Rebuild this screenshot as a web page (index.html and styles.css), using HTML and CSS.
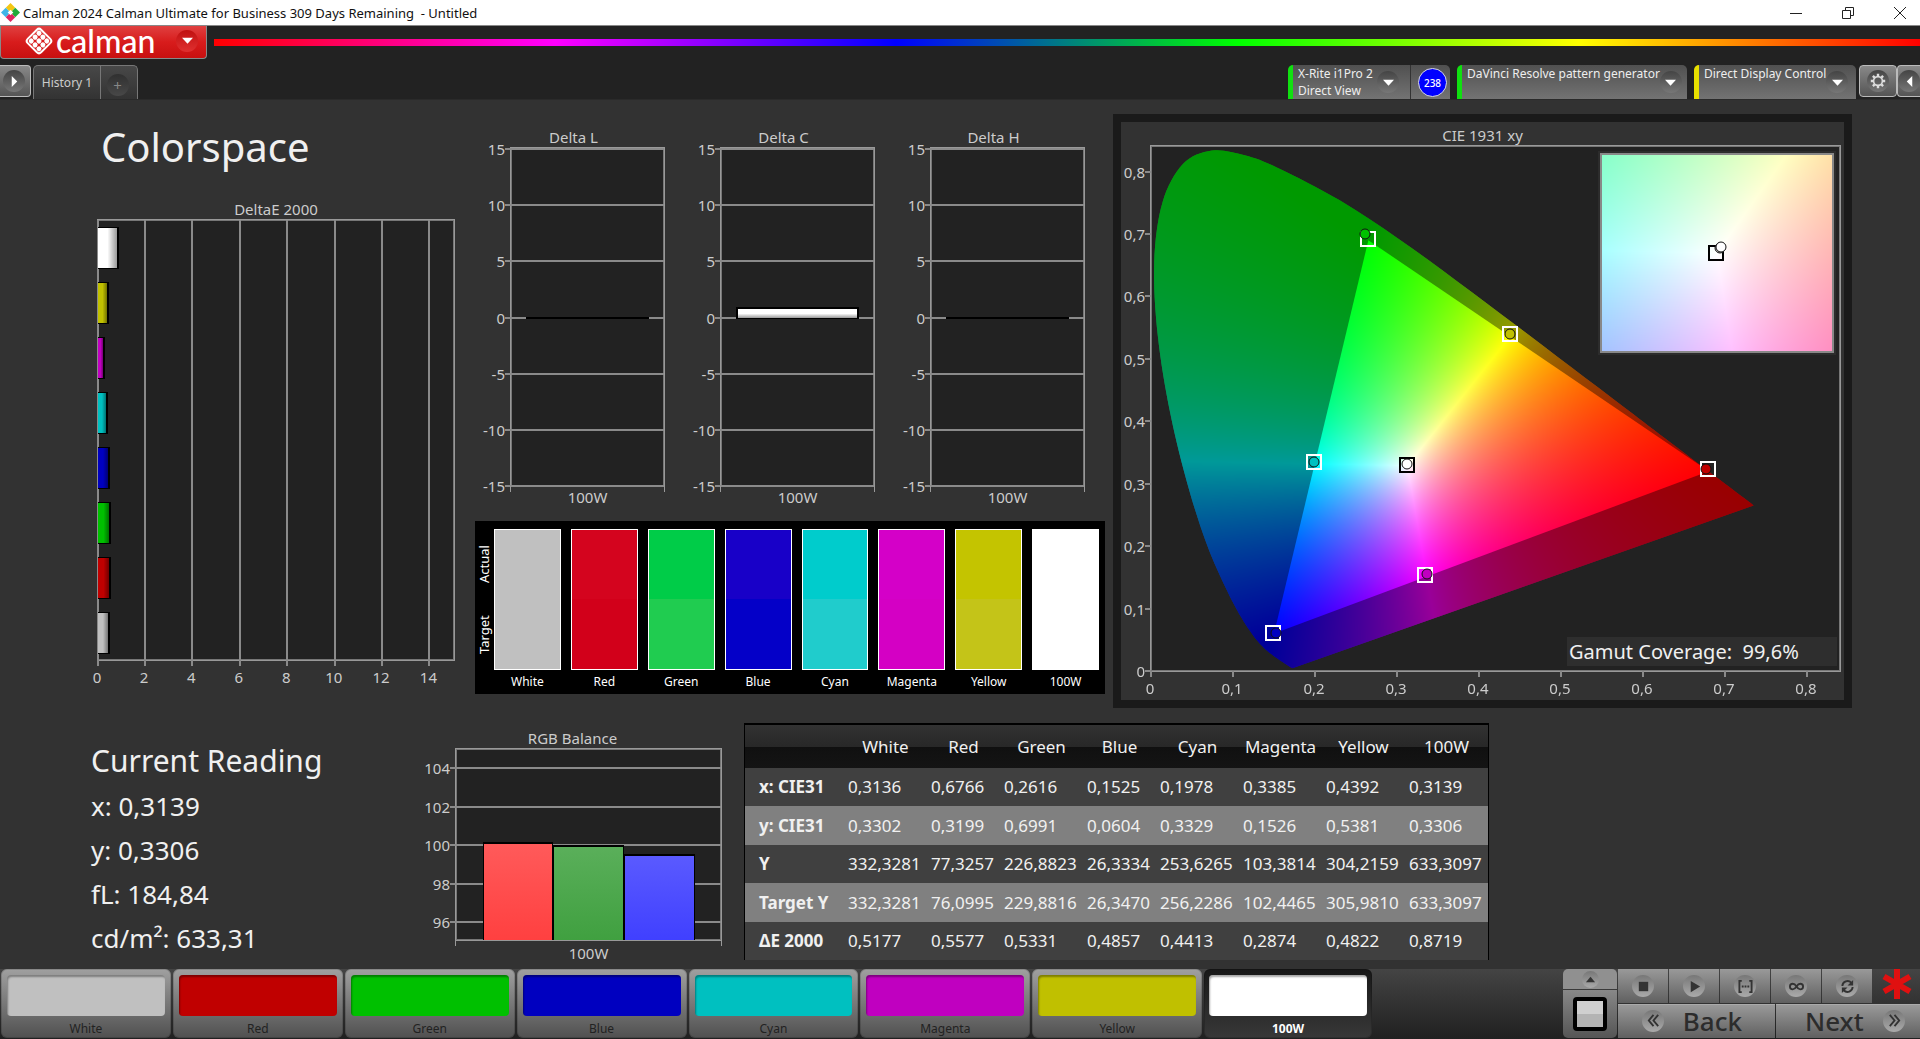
FILE: index.html
```html
<!DOCTYPE html>
<html lang="en">
<head>
<meta charset="utf-8">
<title>Calman 2024 Calman Ultimate for Business</title>
<link rel="stylesheet" href="styles.css">
</head>
<body>
<div class="app">
  <header class="titlebar">
    <svg class="app-icon" viewBox="0 0 20 20" aria-hidden="true">
      <path fill="#f3c613" d="M10 0l5 5-5 5-5-5z"/><path fill="#3fb5e8" d="M5 5l5 5-5 5-5-5z"/><path fill="#22ab3a" d="M15 5l5 5-5 5-5-5z"/><path fill="#e02660" d="M10 10l5 5-5 5-5-5z"/><path fill="#fff" d="M10 7l3 3-3 3-3-3z"/>
    </svg>
    <span class="window-title">Calman 2024 Calman Ultimate for Business 309 Days Remaining&nbsp; - Untitled</span>
    <div class="window-buttons">
      <button type="button" aria-label="Minimize"><svg viewBox="0 0 14 14"><path d="M1 7.500h12"/></svg></button>
      <button type="button" aria-label="Restore"><svg viewBox="0 0 14 14"><path d="M1.500 4.500h8v8h-8zM4.500 4.500v-3h8v8h-3"/></svg></button>
      <button type="button" aria-label="Close"><svg viewBox="0 0 14 14"><path d="M1 1l12 12M13 1L1 13"/></svg></button>
    </div>
  </header>

  <div class="brand-row">
    <button type="button" class="brand">
      <svg class="brand-mark" viewBox="0 0 28 28" aria-hidden="true">
        <g transform="rotate(45 14 14)">
          <rect x="4.500" y="4.500" width="19" height="19" rx="3" fill="none" stroke="#fff" stroke-width="2"/>
          <g fill="#fff"><circle cx="8.500" cy="8.500" r="2.500"/><circle cx="14" cy="8.500" r="2.500"/><circle cx="19.500" cy="8.500" r="2.500"/><circle cx="8.500" cy="14" r="2.500"/><circle cx="14" cy="14" r="2.500"/><circle cx="19.500" cy="14" r="2.500"/><circle cx="8.500" cy="19.500" r="2.500"/><circle cx="14" cy="19.500" r="2.500"/><circle cx="19.500" cy="19.500" r="2.500"/></g>
        </g>
      </svg>
      <span class="brand-name">calman</span>
      <span class="round brand-round"><svg viewBox="0 0 12 12"><path d="M0 3h12L6 9.500z"/></svg></span>
    </button>
    <div class="spectrum"></div>
  </div>

  <div class="tab-row">
    <button type="button" class="edge-button left" aria-label="Expand"><span class="round"><svg viewBox="0 0 12 12"><path d="M3 0v12l6-6z"/></svg></span></button>
    <nav class="tabs">
      <button type="button" class="tab">History 1</button>
      <button type="button" class="tab add" aria-label="Add"><span class="round dim">+</span></button>
    </nav>
    <div class="devices">
      <button type="button" class="device meter">
        <span class="device-name">X-Rite i1Pro 2<br>Direct View</span>
        <span class="round"><svg viewBox="0 0 12 12"><path d="M0 3h12L6 9.500z"/></svg></span>
      </button><span class="meter-count"><b>238</b></span>
      <button type="button" class="device source">
        <span class="device-name">DaVinci Resolve pattern generator</span>
        <span class="round"><svg viewBox="0 0 12 12"><path d="M0 3h12L6 9.500z"/></svg></span>
      </button>
      <button type="button" class="device display">
        <span class="device-name">Direct Display Control</span>
        <span class="round"><svg viewBox="0 0 12 12"><path d="M0 3h12L6 9.500z"/></svg></span>
      </button>
      <button type="button" class="edge-button gear" aria-label="Settings"><span class="round"><svg class="gear-icon" viewBox="0 0 20 20"><circle cx="10" cy="10" r="5.500" fill="none" stroke="#ddd" stroke-width="2"/><path fill="none" stroke="#ddd" stroke-width="3" d="M10 1v3M10 16v3M1 10h3M16 10h3M3.600 3.600l2.200 2.200M14.200 14.200l2.200 2.200M16.400 3.600l-2.200 2.200M5.800 14.200l-2.200 2.200"/></svg></span></button>
      <button type="button" class="edge-button right" aria-label="Collapse"><span class="round"><svg viewBox="0 0 12 12"><path d="M9 0v12L3 6z"/></svg></span></button>
    </div>
  </div>

  <main class="workspace">
    <div class="top">
      <section class="delta-e">
        <h1>Colorspace</h1>
        <h2 class="chart-title">DeltaE 2000</h2>
        <div class="plot plot-e">
          <i class="xt" style="left:0%"><b>0</b></i><i class="xt" style="left:13.2%"><b>2</b></i><i class="xt" style="left:26.5%"><b>4</b></i><i class="xt" style="left:39.8%"><b>6</b></i><i class="xt" style="left:53.2%"><b>8</b></i><i class="xt" style="left:66.5%"><b>10</b></i><i class="xt" style="left:79.8%"><b>12</b></i><i class="xt" style="left:93.1%"><b>14</b></i>
          <div class="bars">
            <span class="bar c-100w" style="width:5.81%"></span>
            <span class="bar c-yellow" style="width:3.21%"></span>
            <span class="bar c-magenta" style="width:1.92%"></span>
            <span class="bar c-cyan" style="width:2.94%"></span>
            <span class="bar c-blue" style="width:3.24%"></span>
            <span class="bar c-green" style="width:3.55%"></span>
            <span class="bar c-red" style="width:3.72%"></span>
            <span class="bar c-white" style="width:3.45%"></span>
          </div>
        </div>
      </section>

      <section class="middle">
        <div class="deltas">
          <figure class="delta">
            <figcaption class="chart-title">Delta L</figcaption>
            <div class="plot plot-d">
              <i class="yt" style="top:0%"><b>15</b></i><i class="yt" style="top:16.67%"><b>10</b></i><i class="yt" style="top:33.33%"><b>5</b></i><i class="yt" style="top:50%"><b>0</b></i><i class="yt" style="top:66.67%"><b>-5</b></i><i class="yt" style="top:83.33%"><b>-10</b></i><i class="yt" style="top:100%"><b>-15</b></i>
              <span class="dbar flat"></span>
            </div>
            <p class="category">100W</p>
          </figure>
          <figure class="delta">
            <figcaption class="chart-title">Delta C</figcaption>
            <div class="plot plot-d">
              <i class="yt" style="top:0%"><b>15</b></i><i class="yt" style="top:16.67%"><b>10</b></i><i class="yt" style="top:33.33%"><b>5</b></i><i class="yt" style="top:50%"><b>0</b></i><i class="yt" style="top:66.67%"><b>-5</b></i><i class="yt" style="top:83.33%"><b>-10</b></i><i class="yt" style="top:100%"><b>-15</b></i>
              <span class="dbar" style="height:3.5%"></span>
            </div>
            <p class="category">100W</p>
          </figure>
          <figure class="delta">
            <figcaption class="chart-title">Delta H</figcaption>
            <div class="plot plot-d">
              <i class="yt" style="top:0%"><b>15</b></i><i class="yt" style="top:16.67%"><b>10</b></i><i class="yt" style="top:33.33%"><b>5</b></i><i class="yt" style="top:50%"><b>0</b></i><i class="yt" style="top:66.67%"><b>-5</b></i><i class="yt" style="top:83.33%"><b>-10</b></i><i class="yt" style="top:100%"><b>-15</b></i>
              <span class="dbar flat"></span>
            </div>
            <p class="category">100W</p>
          </figure>
        </div>

        <div class="compare">
          <div class="compare-side"><span>Actual</span><span>Target</span></div>
          <div class="chip"><span class="chip-color p-white"></span>White</div>
          <div class="chip"><span class="chip-color p-red"></span>Red</div>
          <div class="chip"><span class="chip-color p-green"></span>Green</div>
          <div class="chip"><span class="chip-color p-blue"></span>Blue</div>
          <div class="chip"><span class="chip-color p-cyan"></span>Cyan</div>
          <div class="chip"><span class="chip-color p-magenta"></span>Magenta</div>
          <div class="chip"><span class="chip-color p-yellow"></span>Yellow</div>
          <div class="chip"><span class="chip-color p-100w"></span>100W</div>
        </div>
      </section>

      <section class="cie">
        <h2 class="chart-title">CIE 1931 xy</h2>
        <div class="plot plot-cie">
          <canvas id="gamut" class="gamut"></canvas>
          <i class="xt short" style="left:0%"><b>0</b></i><i class="xt short" style="left:11.9%"><b>0,1</b></i><i class="xt short" style="left:23.8%"><b>0,2</b></i><i class="xt short" style="left:35.7%"><b>0,3</b></i><i class="xt short" style="left:47.6%"><b>0,4</b></i><i class="xt short" style="left:59.5%"><b>0,5</b></i><i class="xt short" style="left:71.4%"><b>0,6</b></i><i class="xt short" style="left:83.3%"><b>0,7</b></i><i class="xt short" style="left:95.2%"><b>0,8</b></i>
          <i class="yt short" style="top:100%"><b>0</b></i><i class="yt short" style="top:88.1%"><b>0,1</b></i><i class="yt short" style="top:76.2%"><b>0,2</b></i><i class="yt short" style="top:64.3%"><b>0,3</b></i><i class="yt short" style="top:52.4%"><b>0,4</b></i><i class="yt short" style="top:40.5%"><b>0,5</b></i><i class="yt short" style="top:28.6%"><b>0,6</b></i><i class="yt short" style="top:16.8%"><b>0,7</b></i><i class="yt short" style="top:4.9%"><b>0,8</b></i>
          <span class="target" style="left:31.5%;bottom:82.2%"></span><span class="reading c-green" style="left:31.1%;bottom:83.3%"></span>
          <span class="target" style="left:52.1%;bottom:64.1%"></span><span class="reading c-yellow" style="left:52.1%;bottom:64.1%"></span>
          <span class="target" style="left:23.7%;bottom:39.8%"></span><span class="reading c-cyan" style="left:23.6%;bottom:39.8%"></span>
          <span class="target dark" style="left:37.2%;bottom:39.3%"></span><span class="reading c-100w" style="left:37.2%;bottom:39.500%"></span>
          <span class="target" style="left:80.9%;bottom:38.4%"></span><span class="reading c-red" style="left:80.5%;bottom:38.4%"></span>
          <span class="target" style="left:39.8%;bottom:18.2%"></span><span class="reading c-magenta" style="left:40.1%;bottom:18.4%"></span>
          <span class="target" style="left:17.7%;bottom:7.3%"></span><span class="reading c-blue" style="left:18.1%;bottom:7.3%"></span>
          <div class="inset">
            <canvas id="zoom"></canvas>
            <span class="target dark" style="left:49.500%;bottom:50%"></span><span class="reading c-white" style="left:51.2%;bottom:52.300%"></span><span class="reading c-100w" style="left:52%;bottom:53%"></span>
          </div>
          <p class="coverage">Gamut Coverage:&nbsp; 99,6%</p>
        </div>
      </section>
    </div>

    <div class="bottom">
      <section class="current">
        <h2>Current Reading</h2>
        <p>x: 0,3139</p>
        <p>y: 0,3306</p>
        <p>fL: 184,84</p>
        <p>cd/m²: 633,31</p>
      </section>
      <section class="balance">
        <h2 class="chart-title">RGB Balance</h2>
        <div class="plot plot-rgb">
          <i class="yt" style="top:10.2%"><b>104</b></i><i class="yt" style="top:30.500%"><b>102</b></i><i class="yt" style="top:50.500%"><b>100</b></i><i class="yt" style="top:70.700%"><b>98</b></i><i class="yt" style="top:90.700%"><b>96</b></i>
          <div class="rgb-bars"><span class="r" style="height:51.4%"></span><span class="g" style="height:49.8%"></span><span class="b" style="height:45%"></span></div>
        </div>
        <p class="category">100W</p>
      </section>
      <section class="data">
        <table>
          <colgroup><col class="w-head"><col class="w-wide"><col class="w-slim"><col class="w-wide"><col class="w-slim"><col class="w-wide"><col class="w-wide"><col class="w-wide"><col class="w-wide"></colgroup>
          <thead><tr><td></td><th scope="col">White</th><th scope="col">Red</th><th scope="col">Green</th><th scope="col">Blue</th><th scope="col">Cyan</th><th scope="col">Magenta</th><th scope="col">Yellow</th><th scope="col">100W</th></tr></thead>
          <tbody>
            <tr><th scope="row">x: CIE31</th><td>0,3136</td><td>0,6766</td><td>0,2616</td><td>0,1525</td><td>0,1978</td><td>0,3385</td><td>0,4392</td><td>0,3139</td></tr>
            <tr><th scope="row">y: CIE31</th><td>0,3302</td><td>0,3199</td><td>0,6991</td><td>0,0604</td><td>0,3329</td><td>0,1526</td><td>0,5381</td><td>0,3306</td></tr>
            <tr><th scope="row">Y</th><td>332,3281</td><td>77,3257</td><td>226,8823</td><td>26,3334</td><td>253,6265</td><td>103,3814</td><td>304,2159</td><td>633,3097</td></tr>
            <tr><th scope="row">Target Y</th><td>332,3281</td><td>76,0995</td><td>229,8816</td><td>26,3470</td><td>256,2286</td><td>102,4465</td><td>305,9810</td><td>633,3097</td></tr>
            <tr><th scope="row">ΔE 2000</th><td>0,5177</td><td>0,5577</td><td>0,5331</td><td>0,4857</td><td>0,4413</td><td>0,2874</td><td>0,4822</td><td>0,8719</td></tr>
          </tbody>
        </table>
      </section>
    </div>
  </main>

  <footer class="dock">
    <div class="patches">
      <button type="button" class="patch"><span class="patch-color c-white"></span>White</button>
      <button type="button" class="patch"><span class="patch-color c-red"></span>Red</button>
      <button type="button" class="patch"><span class="patch-color c-green"></span>Green</button>
      <button type="button" class="patch"><span class="patch-color c-blue"></span>Blue</button>
      <button type="button" class="patch"><span class="patch-color c-cyan"></span>Cyan</button>
      <button type="button" class="patch"><span class="patch-color c-magenta"></span>Magenta</button>
      <button type="button" class="patch"><span class="patch-color c-yellow"></span>Yellow</button>
      <button type="button" class="patch selected"><span class="patch-color c-100w"></span>100W</button>
    </div>
    <div class="controls">
      <div class="pattern">
        <button type="button" class="pattern-up" aria-label="Pattern options"><span class="disc small"><svg viewBox="0 0 12 12"><path d="M1 9h10L6 3z"/></svg></span></button>
        <button type="button" class="pattern-window" aria-label="Pattern window"><span class="pattern-swatch"></span></button>
      </div>
      <div class="transport">
        <div class="transport-row">
          <button type="button" aria-label="Stop"><span class="disc"><svg viewBox="0 0 16 16"><path d="M3 3h10v10H3z"/></svg></span></button>
          <button type="button" aria-label="Play"><span class="disc"><svg viewBox="0 0 16 16"><path d="M4 2v12l10-6z"/></svg></span></button>
          <button type="button" aria-label="Read series"><span class="disc"><svg viewBox="0 0 16 16"><path class="line" d="M4 2H1.500v12H4M12 2h2.500v12H12"/><path d="M4 7h2v2H4zM7 7h2v2H7zM10 7h2v2h-2z"/></svg></span></button>
          <button type="button" aria-label="Continuous"><span class="disc"><svg viewBox="0 0 16 16"><path class="line" d="M8 8C6.500 5.500 5 5 4 5a3 3 0 000 6c1 0 2.500-.5 4-3s3-3 4-3a3 3 0 010 6c-1 0-2.500-.5-4-3z"/></svg></span></button>
          <button type="button" aria-label="Refresh"><span class="disc"><svg viewBox="0 0 16 16"><path class="line" d="M2.500 7.500A5.500 5.500 0 0112 4M13.500 8.500A5.500 5.500 0 014 12"/><path d="M14 1v6H8zM2 15V9h6z"/></svg></span></button>
          <svg class="asterisk" viewBox="0 0 30 30" aria-hidden="true"><path d="M15 0v30M2 7.500l26 15M28 7.500L2 22.500"/></svg>
        </div>
        <div class="nav-row">
          <button type="button"><span class="disc"><svg viewBox="0 0 16 16"><path class="line" d="M8 2L3 8l5 6M13 2L8 8l5 6"/></svg></span>Back</button>
          <button type="button">Next<span class="disc"><svg viewBox="0 0 16 16"><path class="line" d="M3 2l5 6-5 6M8 2l5 6-5 6"/></svg></span></button>
        </div>
      </div>
    </div>
  </footer>
</div>
<script src="app.js"></script>
</body>
</html>
```
FILE: styles.css
```css
* { box-sizing: border-box; }
body { margin: 0; background: #323232; color: #ccc; font: 15px/20px "Noto Sans", "Open Sans", sans-serif; }
h1, h2, p, figure { margin: 0; font-weight: 400; }
button { margin: 0; padding: 0; border: 0; background: none; color: inherit; font: inherit; cursor: pointer; }
svg { display: block; }
.app { display: flex; flex-direction: column; min-height: 100vh; }

/* Swatch colours */
.c-white { --c: #c0c0c0; }
.c-red { --c: #c00000; }
.c-green { --c: #00c000; }
.c-blue { --c: #0000c0; }
.c-cyan { --c: #00c0c0; }
.c-magenta { --c: #c000c0; }
.c-yellow { --c: #c0c000; }
.c-100w { --c: #fff; }

/* Title bar */
.titlebar { display: flex; align-items: center; gap: 3px; height: 26px; padding: 0 13px 0 1px; background: #fff; color: #111; border-bottom: 1px solid #888; font-size: 13px; }
.app-icon { width: 19px; height: 19px; }
.window-buttons { display: flex; gap: 38px; margin-left: auto; }
.window-buttons svg { width: 14px; height: 14px; fill: none; stroke: #222; }

/* Brand row */
.brand-row { display: flex; height: 36px; background: #222; gap: 7px; }
.brand { display: flex; align-items: center; width: 207px; height: 33px; padding: 0 8px 3px 24px; border: 1px solid #888; border-top: 0; border-radius: 0 0 4px 4px; background: linear-gradient(#e04040, #d81c1c 50%, #c81010); color: #fff; }
.brand-mark { width: 28px; height: 28px; margin-right: 3px; }
.brand-name { font: 500 32px/30px "Lato", sans-serif; }
.round { display: flex; align-items: center; justify-content: center; flex: none; width: 22px; height: 22px; border-radius: 50%; background: linear-gradient(#444, #777); }
.round svg { width: 11px; height: 11px; fill: #fff; }
.brand-round { margin-left: auto; background: linear-gradient(#c01010, #e03030); }
.spectrum { flex: 1; height: 7px; margin-top: 13px; background: linear-gradient(90deg, #f00, #f0f 20%, #00f 40%, #0f0 60%, #ff0 80%, #f00); }

/* Tab row */
.tab-row { display: flex; align-items: flex-end; height: 38px; padding-top: 3px; background: #222; border-bottom: 1px solid #2a2a2a; }
.edge-button { display: flex; align-items: center; justify-content: center; align-self: flex-start; width: 38px; height: 32px; border: 1px solid #bbb; border-radius: 4px; background: linear-gradient(#888, #555); }
.edge-button.left { width: 31px; padding-right: 2px; border-left: 0; border-radius: 0 4px 4px 0; }
.edge-button.right { width: 23px; border-right: 0; border-radius: 4px 0 0 4px; }
.gear-icon.gear-icon { width: 16px; height: 16px; }
.tabs { display: flex; height: 34px; margin-left: 2px; border: 1px solid #777; border-bottom: 0; border-radius: 5px 5px 0 0; background: linear-gradient(#484848, #333); }
.tab { width: 66px; font-size: 12px; }
.tab.add { display: flex; align-items: center; justify-content: center; width: 37px; padding-top: 4px; padding-right: 3px; border-left: 1px solid #777; }
.round.dim { background: linear-gradient(#303030, #484848); color: #888; font-size: 15px; }
.devices { display: flex; align-items: flex-end; margin-left: auto; height: 34px; font-size: 12px; color: #eee; }
.device { display: flex; align-items: flex-start; justify-content: space-between; height: 34px; padding: 0 8px 0 5px; border-left: 5px solid #10e010; border-radius: 5px 5px 0 0; background: linear-gradient(#505050, #737373); text-align: left; line-height: 17px; white-space: nowrap; }
.device .round { align-self: center; }
.meter { width: 122px; padding-right: 11px; border-top-right-radius: 0; }
.meter-count { display: grid; place-items: center; width: 40px; height: 34px; margin-right: 7px; padding-left: 4px; border-left: 1px solid #333; border-radius: 0 5px 0 0; background: linear-gradient(#505050, #737373); }
.meter-count b { width: 29px; height: 29px; border: 1px solid #ddd; border-radius: 50%; background: #00f; color: #fff; font-size: 10px; font-weight: 500; line-height: 28px; text-align: center; }
.source { width: 230px; margin-right: 7px; padding-right: 7px; }
.display { width: 162px; margin-right: 3px; border-left-color: #e8e000; }

/* Workspace */
.workspace { flex: 1; }
.top { display: grid; grid-template-columns: minmax(0, 475fr) minmax(0, 638fr) minmax(0, 739fr) minmax(0, 68fr); height: 608px; padding-top: 14px; }
.bottom { display: grid; grid-template-columns: minmax(0, 455fr) minmax(0, 289fr) minmax(0, 743fr) minmax(0, 433fr); }
.chart-title, .category { font-size: 15px; line-height: 20px; text-align: center; }

/* Plot area with ticks placed by value */
.plot { position: relative; border: 1px solid #999; background: #222; outline: 1px solid #777; outline-offset: -2px; }
.xt, .yt { position: absolute; font-style: normal; }
.xt b, .yt b { position: absolute; font-weight: 400; line-height: 20px; white-space: nowrap; }
.xt { top: 0; bottom: -6px; width: 2px; margin-left: -1px; background: #8a8a8a; }
.xt b { top: 100%; left: 0; width: 40px; margin: 1px 0 0 -20px; text-align: center; }
.yt { left: -6px; right: 0; height: 2px; margin-top: -1px; background: #8a8a8a; }
.yt b { top: -9px; right: 100%; }
.xt.short { top: 100%; }
.yt.short { right: 100%; }

.delta-e { padding: 5px 20px 0 97px; }
.delta-e h1 { margin: 0 0 24px 4px; color: #f0f0f0; font-size: 40px; line-height: 56px; }
.plot-e { height: 442px; }
.bars { position: relative; display: flex; flex-direction: column; justify-content: space-around; height: 100%; }
.bar { height: 42px; border: 1px solid #000; border-width: 1px 2px 1px 0; background: linear-gradient(90deg, transparent 50%, rgba(0, 0, 0, .4)), var(--c); }

.middle { padding: 13px 8px 0 0; }
.deltas { display: grid; grid-template-columns: repeat(3, minmax(0, 1fr)); }
.delta { padding: 0 20px 0 35px; }
.delta .chart-title { margin: 0 14px 0 0; text-indent: -14px; }
.plot-d { height: 340px; border-top-width: 2px; }
.plot-d::after { content: ""; position: absolute; top: 100%; left: -1px; right: -1px; height: 6px; border: 1px solid #999; border-width: 0 1px; }
.dbar { position: absolute; left: 10%; right: 10%; bottom: calc(50% - 1px); border: 2px solid #000; border-bottom-width: 1px; background: linear-gradient(#fff 50%, #999); }
.dbar.flat { height: 2px; border: 0; background: #000; }

.compare { display: flex; gap: 10px; margin-top: 14px; padding: 8px 6px 0 0; background: #000; color: #fff; font-size: 12px; }
.compare-side { display: flex; justify-content: space-around; width: 19px; height: 141px; margin-right: -10px; writing-mode: vertical-rl; transform: rotate(180deg); flex-direction: row-reverse; font-size: 13px; line-height: 19px; }
.chip { flex: 1; text-align: center; line-height: 24px; }
.chip-color { display: block; height: 141px; border: 1px solid #fff; background: linear-gradient(var(--a) 50%, var(--t) 50%); }
.p-white { --a: #c0c0c0; --t: #c0c0c0; }
.p-red { --a: #d4041e; --t: #d2001a; }
.p-green { --a: #00cc48; --t: #20cc50; }
.p-blue { --a: #1800c8; --t: #0400c8; }
.p-cyan { --a: #00cccc; --t: #20cccc; }
.p-magenta { --a: #d400c8; --t: #d400c4; }
.p-yellow { --a: #c4c400; --t: #c4c418; }
.p-100w { --a: #fff; --t: #fff; }

.cie { display: flex; flex-direction: column; padding: 4px 3px 28px 29px; border: 8px solid #1a1a1a; }
.cie .chart-title { margin-left: -26px; line-height: 19px; }
.plot-cie { flex: 1; }
.gamut { position: absolute; width: 100%; height: 100%; }
.target, .reading { position: absolute; transform: translate(-50%, 50%); }
.target { width: 16px; height: 16px; border: 2px solid #fff; }
.target.dark { border-color: #000; }
.reading { width: 11px; height: 11px; border: 1px solid #111; border-radius: 50%; background: var(--c); }
.inset { position: absolute; top: 7px; right: 6px; width: 34%; height: 38%; border: 2px solid #888; box-shadow: 0 0 0 2px #2c2c2c; }
.inset canvas { display: block; width: 100%; height: 100%; }
.coverage { position: absolute; right: 3px; bottom: 5px; width: 270px; padding-left: 2px; background: #2e2e2e; color: #f0f0f0; font-size: 20px; line-height: 29px; white-space: nowrap; }

.current { padding: 29px 0 0 91px; color: #f0f0f0; }
.current h2 { font-size: 30px; line-height: 47px; }
.current p { font-size: 26px; line-height: 44px; }
.balance { padding: 20px 22px 0 0; }
.balance .chart-title { padding-right: 32px; }
.plot-rgb { height: 193px; }
.plot-rgb::after { content: ""; position: absolute; top: 100%; left: -1px; right: -1px; height: 6px; border: 1px solid #999; border-width: 0 1px; }
.rgb-bars { position: relative; display: flex; align-items: flex-end; height: 100%; margin: 0 10%; }
.rgb-bars span { flex: 1; border: 2px solid #000; border-width: 2px 1px 0; }
.rgb-bars .r { background: linear-gradient(#ff5a5a, #ff4040); }
.rgb-bars .g { background: linear-gradient(#5aaf5a, #40a040); }
.rgb-bars .b { background: linear-gradient(#5a5aff, #4040ff); }
.balance .category { padding-top: 2px; }

.data { padding-top: 15px; }
table { width: 100%; border: 1px solid #000; border-top-width: 2px; border-bottom: 0; border-spacing: 0; table-layout: fixed; color: #f0f0f0; font-size: 17px; white-space: nowrap; }
.w-head { width: 99px; }
.w-wide { width: 83px; }
.w-slim { width: 73px; }
thead tr { height: 43px; background: linear-gradient(#323232, #282828 50%, #101010 50%, #141414); }
thead th { padding: 0; font-weight: 400; }
tbody tr { height: 38px; background: #404040; }
tbody tr:nth-child(even) { height: 39px; background: #808080; }
tbody th { padding: 0 0 0 14px; font-weight: 700; text-align: left; }
tbody td { padding: 0 0 0 4px; }

/* Dock */
.dock { display: flex; justify-content: space-between; height: 70px; background: linear-gradient(#444, #202020); }
.patches { display: flex; gap: 2px; flex: 1; max-width: 1373px; padding: 0 1px; }
.patch { flex: 1; height: 69px; padding: 6px 6px 0; border-radius: 6px; background: linear-gradient(#a0a0a0, #505050); box-shadow: inset 0 0 0 1px rgba(0, 0, 0, .15); color: #222; font-size: 12px; line-height: 25px; }
.patch-color { display: block; height: 41px; border-radius: 4px; background: var(--c); box-shadow: inset 1px 2px 2px rgba(0, 0, 0, .35); }
.patch.selected { padding-left: 5px; padding-right: 5px; background: linear-gradient(#181818, #383838); color: #fff; font-weight: 700; }
.controls { display: flex; gap: 1px; width: 357px; }
.controls button { background: linear-gradient(#999, #606060); }
.controls path { fill: #333; }
.controls .line { fill: none; stroke: #333; stroke-width: 2; }
.pattern { display: flex; flex-direction: column; gap: 1px; width: 54px; height: 69px; }
.pattern button { display: grid; place-items: center; }
.pattern .pattern-up { height: 20px; border-radius: 5px 5px 0 0; background: #909090; }
.pattern .pattern-window { flex: 1; border-radius: 0 0 5px 5px; background: linear-gradient(#888, #555); }
.pattern-swatch { width: 34px; height: 34px; border: 4px solid #000; border-radius: 4px; background: linear-gradient(#d0d0d0 50%, #b4b4b4 50%); }
.disc { display: grid; place-items: center; width: 22px; height: 22px; border-radius: 50%; background: linear-gradient(#777, #aaa); }
.disc svg { width: 15px; height: 15px; }
.disc.small { width: 17px; height: 17px; }
.disc.small svg { width: 11px; height: 11px; }
.transport { display: flex; flex-direction: column; flex: 1; gap: 1px; height: 69px; }
.transport-row, .nav-row { display: flex; gap: 1px; flex: 1; }
.transport-row button { display: grid; place-items: center; width: 50px; }
.asterisk { width: 30px; height: 30px; margin: 0 auto; }
.controls .asterisk path { stroke: #e01010; stroke-width: 6; }
.nav-row button { display: flex; align-items: center; justify-content: space-between; flex: 1; padding: 0 33px 2px 24px; border-top: 1px solid #aaa; color: #2c2c2c; font-size: 26px; font-weight: 500; }
.nav-row button:last-child { padding: 0 15px 2px 29px; }
```
FILE: app.js
```js
// Spectral locus of the CIE 1931 2-degree observer, 400 nm to 700 nm.
const LOCUS = [
  [0.1733, 0.0048], [0.1714, 0.0051], [0.1644, 0.0109], [0.1566, 0.0177], [0.1440, 0.0297],
  [0.1355, 0.0399], [0.1241, 0.0578], [0.1096, 0.0868], [0.0913, 0.1327], [0.0687, 0.2007],
  [0.0454, 0.2950], [0.0235, 0.4127], [0.0082, 0.5384], [0.0039, 0.6548], [0.0139, 0.7502],
  [0.0389, 0.8120], [0.0743, 0.8338], [0.1142, 0.8262], [0.1547, 0.8059], [0.2296, 0.7543],
  [0.3016, 0.6923], [0.3731, 0.6245], [0.4441, 0.5547], [0.5125, 0.4866], [0.5752, 0.4242],
  [0.6270, 0.3725], [0.6915, 0.3083], [0.7347, 0.2653]
];
const P3 = [[0.265, 0.69], [0.68, 0.32], [0.15, 0.06]];
const AXIS = { x0: 0, x1: 0.84, y0: 0, y1: 0.841 };
const INSET = { x0: 0.2807, x1: 0.3447, y0: 0.297, y1: 0.361 };

// Brightest displayable colour for a chromaticity.
function color(x, y) {
  const z = 1 - x - y;
  const rgb = [
    2.4935 * x - 0.9314 * y - 0.4027 * z,
    -0.8295 * x + 1.7627 * y + 0.0236 * z,
    0.0358 * x - 0.0762 * y + 0.9569 * z
  ].map(v => Math.max(0, v));
  const top = Math.max(...rgb);
  return rgb.map(v => 255 * v / top);
}

function field(width, height, range) {
  const layer = document.createElement('canvas');
  layer.width = width;
  layer.height = height;
  const ctx = layer.getContext('2d');
  const image = ctx.createImageData(width, height);
  for (let j = 0, k = 0; j < height; j++) {
    const y = range.y1 - (j + 0.5) / height * (range.y1 - range.y0);
    for (let i = 0; i < width; i++, k += 4) {
      const x = range.x0 + (i + 0.5) / width * (range.x1 - range.x0);
      const c = color(x, y);
      image.data[k] = c[0];
      image.data[k + 1] = c[1];
      image.data[k + 2] = c[2];
      image.data[k + 3] = 255;
    }
  }
  ctx.putImageData(image, 0, 0);
  return layer;
}

function fit(canvas) {
  canvas.width = canvas.clientWidth;
  canvas.height = canvas.clientHeight;
  return canvas.getContext('2d');
}

function drawGamut(canvas) {
  const ctx = fit(canvas);
  const { width, height } = canvas;
  const layer = field(width, height, AXIS);
  const at = p => [p[0] / AXIS.x1 * width, height - p[1] / AXIS.y1 * height];

  ctx.save();
  ctx.beginPath();
  const pts = LOCUS.map(at);
  ctx.moveTo(...pts[0]);
  for (let i = 0; i < pts.length - 1; i++) {
    const a = pts[Math.max(0, i - 1)], b = pts[i], c = pts[i + 1], d = pts[Math.min(pts.length - 1, i + 2)];
    ctx.bezierCurveTo(b[0] + (c[0] - a[0]) / 6, b[1] + (c[1] - a[1]) / 6,
      c[0] - (d[0] - b[0]) / 6, c[1] - (d[1] - b[1]) / 6, c[0], c[1]);
  }
  ctx.closePath();
  ctx.clip();
  ctx.drawImage(layer, 0, 0);
  ctx.fillStyle = 'rgba(0, 0, 0, 0.4)';
  ctx.fillRect(0, 0, width, height);
  ctx.restore();

  ctx.save();
  ctx.beginPath();
  P3.map(at).forEach(p => ctx.lineTo(...p));
  ctx.closePath();
  ctx.clip();
  ctx.drawImage(layer, 0, 0);
  ctx.restore();
}

function drawInset(canvas) {
  const ctx = fit(canvas);
  ctx.drawImage(field(canvas.width, canvas.height, INSET), 0, 0);
}

function draw() {
  drawGamut(document.getElementById('gamut'));
  drawInset(document.getElementById('zoom'));
}

draw();
window.addEventListener('resize', draw);
```
